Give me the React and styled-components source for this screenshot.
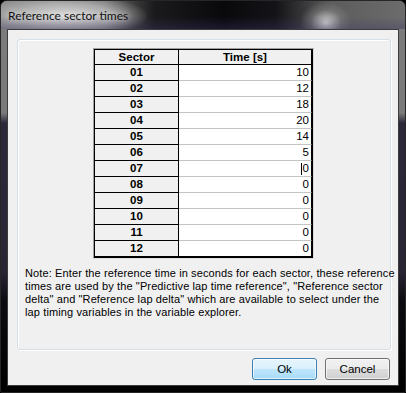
import { Fragment } from "react";
import styled, { createGlobalStyle } from "styled-components";

const GlobalStyle = createGlobalStyle`
  html, body {
    margin: 0;
    padding: 0;
    background: #000;
  }

  * {
    box-sizing: border-box;
  }
`;

const Window = styled.div`
  width: 406px;
  height: 393px;
  border: 1px solid #262626;
  border-radius: 7px 7px 2px 2px;
  overflow: hidden;
  display: flex;
  flex-direction: column;
  background: linear-gradient(
    to bottom,
    #7c7c7c 0px,
    #7a7a7a 112px,
    #2d2839 122px,
    #2a2535 270px,
    #0c0b10 300px,
    #000 100%
  );
`;

const TitleBar = styled.div`
  height: 28px;
  flex-shrink: 0;
  padding: 0 0 0 7px;
  display: flex;
  align-items: center;
  font-family: "Lato", "Liberation Sans", sans-serif;
  font-size: 12px;
  color: #101010;
  text-shadow: 0 0 6px rgba(255, 255, 255, 0.8);
  background:
    linear-gradient(to bottom, transparent 55%, rgba(62, 52, 104, 0.35) 100%),
    radial-gradient(ellipse 84px 22px at 64px 15px, rgba(225, 225, 225, 0.95) 0%, rgba(192, 192, 192, 0.75) 55%, rgba(160, 160, 160, 0) 100%),
    radial-gradient(ellipse 26px 22px at 325px 22px, rgba(225, 225, 225, 0.9) 0%, rgba(140, 140, 140, 0.45) 60%, rgba(90, 90, 90, 0) 100%),
    linear-gradient(
      to right,
      #8a8a8a 0%,
      #6a6a6a 26%,
      #1a1a1c 38%,
      #09090c 55%,
      #141418 68%,
      #5c5c5c 82%,
      #6c6c6c 100%
    );
`;

const Client = styled.div`
  flex: 1;
  margin: 0 6px 6px;
  border: 1px solid #3c3c3c;
  background: #f0f0f0;
  padding: 9px 7px 5px 9px;
  display: flex;
  flex-direction: column;
`;

const Panel = styled.div`
  flex: 1;
  border: 1px solid #d5dfe5;
  border-radius: 3px;
  box-shadow: inset 1px 1px 0 #fff, 1px 1px 0 #fff;
  padding: 8px 8px 0 7px;
`;

const TableFrame = styled.div`
  width: 221px;
  margin: 0 auto;
  border: 1px solid;
  border-color: #a0a0a0 #dcdcdc #dcdcdc #a0a0a0;
`;

const Grid = styled.div`
  display: grid;
  grid-template-columns: 84px 133px;
  border: 1px solid #000;
  background: #fff;
  font-family: "Liberation Sans", Arial, sans-serif;
  font-size: 11px;
  color: #000;
`;

const HeaderCell = styled.div`
  height: 15px;
  border-right: 1px solid #000;
  border-bottom: 1px solid #000;
  background: #f0f0f0;
  font-weight: bold;
  font-size: 11.5px;
  line-height: 14px;
  text-align: center;
`;

const SectorCell = styled.div`
  height: 16px;
  border-right: 1px solid #000;
  border-bottom: 1px solid #000;
  background: #f0f0f0;
  font-weight: bold;
  font-size: 11.5px;
  line-height: 15px;
  text-align: center;
`;

const TimeCell = styled.div`
  height: 16px;
  border-right: 1px solid #000;
  border-bottom: 1px solid ${(p) => (p.$last ? "#000" : "#c4c4c4")};
  background: #fff;
  line-height: 15px;
  font-size: 11.5px;
  padding-right: 2px;
  display: flex;
  justify-content: flex-end;
  align-items: center;
`;

const Caret = styled.span`
  width: 1px;
  height: 12px;
  background: #000;
  margin-right: 1px;
`;

const Note = styled.p`
  margin: 8px 0 0;
  font-family: "Liberation Sans", Arial, sans-serif;
  font-size: 11px;
  line-height: 13px;
  letter-spacing: 0.12px;
  color: #000;
  white-space: nowrap;
`;

const ButtonRow = styled.div`
  display: flex;
  justify-content: flex-end;
  gap: 8px;
  margin-top: 8px;
  padding-right: 1px;
`;

const Button = styled.button`
  width: 65px;
  height: 22px;
  padding: 0;
  border-radius: 3px;
  border: 1px solid ${(p) => (p.$default ? "#3c7fb1" : "#707070")};
  background: ${(p) =>
    p.$default
      ? "linear-gradient(to bottom, #e8f5fc 0%, #d9f0fc 50%, #bee6fd 50%, #a9dbf6 100%)"
      : "linear-gradient(to bottom, #f2f2f2 0%, #ebebeb 50%, #dddddd 50%, #cfcfcf 100%)"};
  box-shadow: inset 0 0 0 1px rgba(255, 255, 255, 0.65);
  font-family: "Liberation Sans", Arial, sans-serif;
  font-size: 11.5px;
  color: #000;
`;

const sectors = [
  { id: "01", time: 10 },
  { id: "02", time: 12 },
  { id: "03", time: 18 },
  { id: "04", time: 20 },
  { id: "05", time: 14 },
  { id: "06", time: 5 },
  { id: "07", time: 0, editing: true },
  { id: "08", time: 0 },
  { id: "09", time: 0 },
  { id: "10", time: 0 },
  { id: "11", time: 0 },
  { id: "12", time: 0 },
];

const App = () => {
  return (
    <>
      <GlobalStyle />
      <Window>
        <TitleBar>Reference sector times</TitleBar>
        <Client>
          <Panel>
            <TableFrame>
              <Grid>
                <HeaderCell>Sector</HeaderCell>
                <HeaderCell>Time [s]</HeaderCell>
                {sectors.map((s, i) => (
                  <Fragment key={s.id}>
                    <SectorCell>{s.id}</SectorCell>
                    <TimeCell $last={i === sectors.length - 1}>
                      {s.editing && <Caret />}
                      {s.time}
                    </TimeCell>
                  </Fragment>
                ))}
              </Grid>
            </TableFrame>
            <Note>
              Note: Enter the reference time in seconds for each sector, these reference
              <br />
              times are used by the "Predictive lap time reference", "Reference sector
              <br />
              delta" and "Reference lap delta" which are available to select under the
              <br />
              lap timing variables in the variable explorer.
            </Note>
          </Panel>
          <ButtonRow>
            <Button $default>Ok</Button>
            <Button>Cancel</Button>
          </ButtonRow>
        </Client>
      </Window>
    </>
  );
};

export default App;
